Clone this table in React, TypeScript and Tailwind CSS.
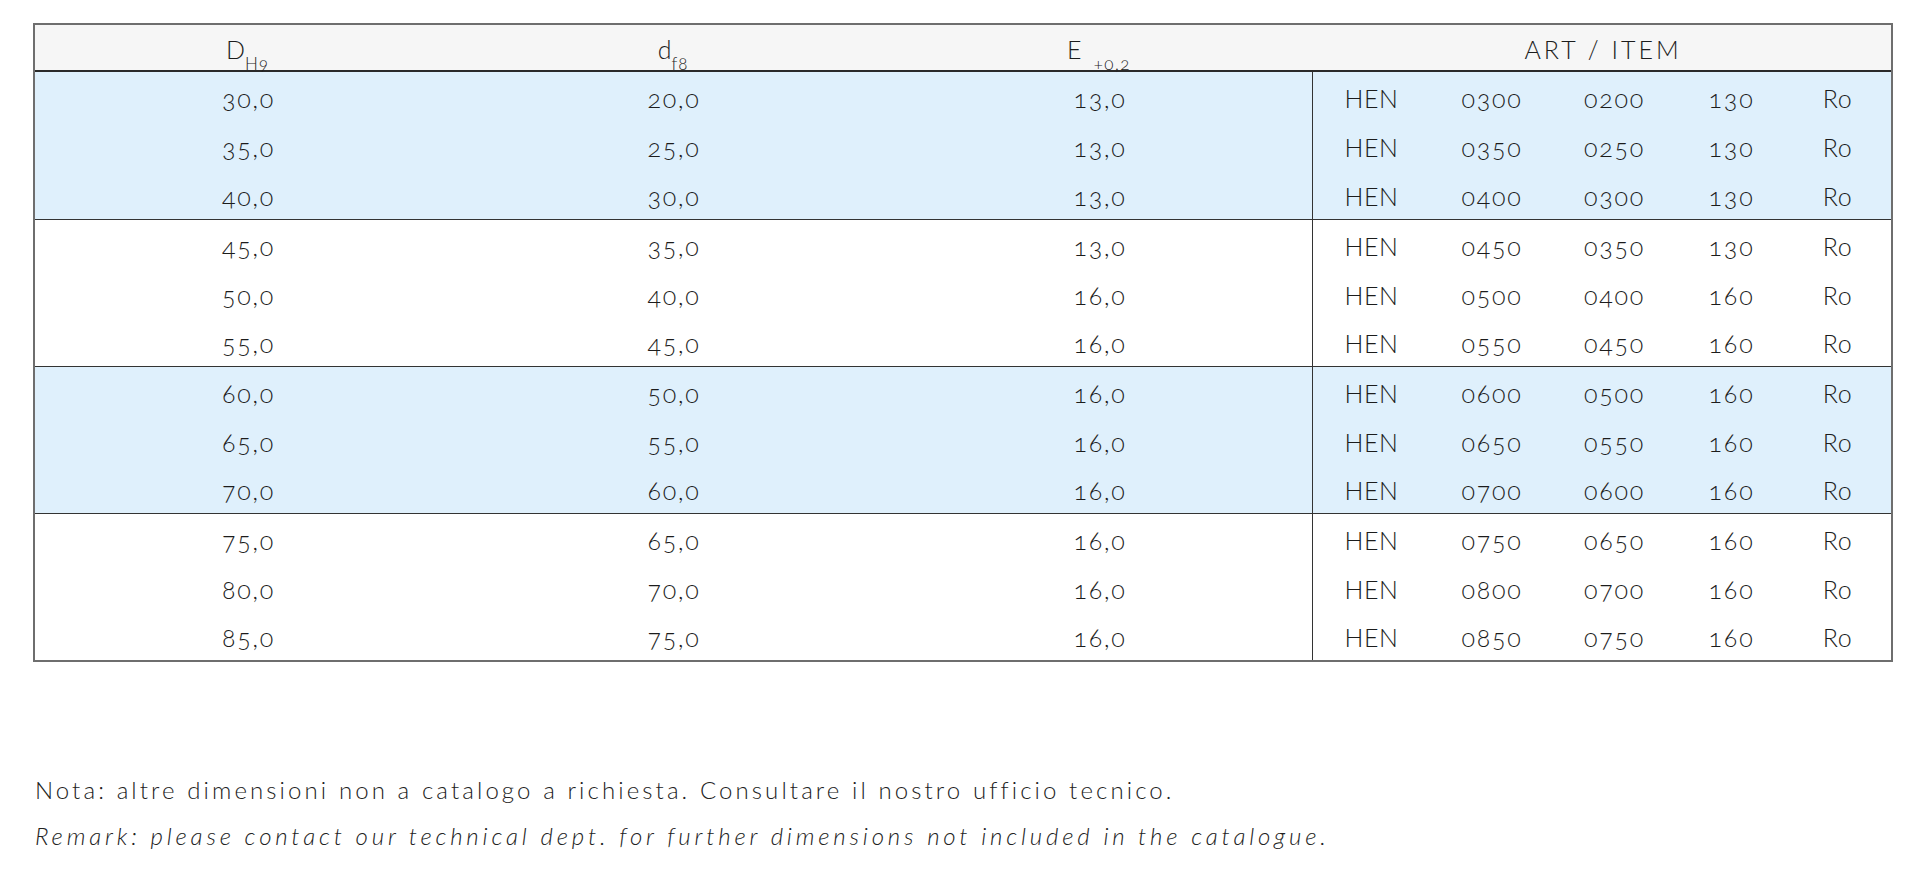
import React from "react";

const groups: string[][][] = [
  [
    ["30,0", "20,0", "13,0", "0300", "0200", "130"],
    ["35,0", "25,0", "13,0", "0350", "0250", "130"],
    ["40,0", "30,0", "13,0", "0400", "0300", "130"],
  ],
  [
    ["45,0", "35,0", "13,0", "0450", "0350", "130"],
    ["50,0", "40,0", "16,0", "0500", "0400", "160"],
    ["55,0", "45,0", "16,0", "0550", "0450", "160"],
  ],
  [
    ["60,0", "50,0", "16,0", "0600", "0500", "160"],
    ["65,0", "55,0", "16,0", "0650", "0550", "160"],
    ["70,0", "60,0", "16,0", "0700", "0600", "160"],
  ],
  [
    ["75,0", "65,0", "16,0", "0750", "0650", "160"],
    ["80,0", "70,0", "16,0", "0800", "0700", "160"],
    ["85,0", "75,0", "16,0", "0850", "0750", "160"],
  ],
];

function Row({ r }: { r: string[] }) {
  return (
    <div className="grid grid-cols-[425px_426px_426px_1fr] h-[49px] tracking-[1.8px]">
      <div className="flex items-center justify-center pt-[4px] pl-[2px]">{r[0]}</div>
      <div className="flex items-center justify-center pt-[4px] pl-[2px]">{r[1]}</div>
      <div className="flex items-center justify-center pt-[4px] pl-[2px]">{r[2]}</div>
      <div className="flex border-l border-[#333] pt-[4px]">
        <div className="w-[117px] flex items-center justify-center tracking-[0.6px]">HEN</div>
        <div className="w-[122px] flex items-center justify-center pl-[2px]">{r[3]}</div>
        <div className="w-[123px] flex items-center justify-center pl-[2px]">{r[4]}</div>
        <div className="w-[111px] flex items-center justify-center pl-[2px]">{r[5]}</div>
        <div className="flex-1 flex items-center justify-center tracking-[0.6px] pr-[2px]">Ro</div>
      </div>
    </div>
  );
}

export default function App() {
  return (
    <div
      className="w-[1920px] h-[879px] bg-white text-[#1c1c1c] pt-[23px] pl-[33px] pr-[27px] font-light oldstyle-nums"
      style={{ fontFamily: "Lato, 'Noto Sans', sans-serif" }}
    >
      <div className="w-[1860px] border-2 border-[#6e6e6e] text-[25px] leading-[25px]">
        <div className="grid grid-cols-[425px_426px_426px_1fr] h-[47px] bg-[#f6f6f6] border-b-2 border-[#2a2a2a]">
          <div className="flex items-end justify-center">
            <span className="mb-[8px]">D</span>
            <span className="text-[17px] leading-[17px] mb-[-2px] tracking-[1px]">H9</span>
          </div>
          <div className="flex items-end justify-center">
            <span className="mb-[8px]">d</span>
            <span className="text-[17px] leading-[17px] mb-[-2px] tracking-[1px]">f8</span>
          </div>
          <div className="flex items-end justify-center">
            <span className="mb-[8px] mr-[12px]">E</span>
            <span className="text-[17px] leading-[17px] mb-[-2px] tracking-[1.5px]">+0,2</span>
          </div>
          <div className="flex items-end justify-center">
            <span className="mb-[8px] tracking-[3px] pl-[3px]">ART / ITEM</span>
          </div>
        </div>
        {groups.map((g, gi) => (
          <div
            key={gi}
            className={
              "h-[147px] flex flex-col " +
              (gi % 2 === 0 ? "bg-[#dff0fc] " : "bg-white ") +
              (gi > 0 ? "border-t border-[#333]" : "")
            }
          >
            {g.map((r, ri) => (
              <Row key={ri} r={r} />
            ))}
          </div>
        ))}
      </div>
      <div className="mt-[105px] text-[24px] leading-[46px] text-[#222] pl-[2px]">
        <p className="tracking-[3.1px]">Nota: altre dimensioni non a catalogo a richiesta. Consultare il nostro ufficio tecnico.</p>
        <p className="italic tracking-[3.82px]">Remark: please contact our technical dept. for further dimensions not included in the catalogue.</p>
      </div>
    </div>
  );
}
